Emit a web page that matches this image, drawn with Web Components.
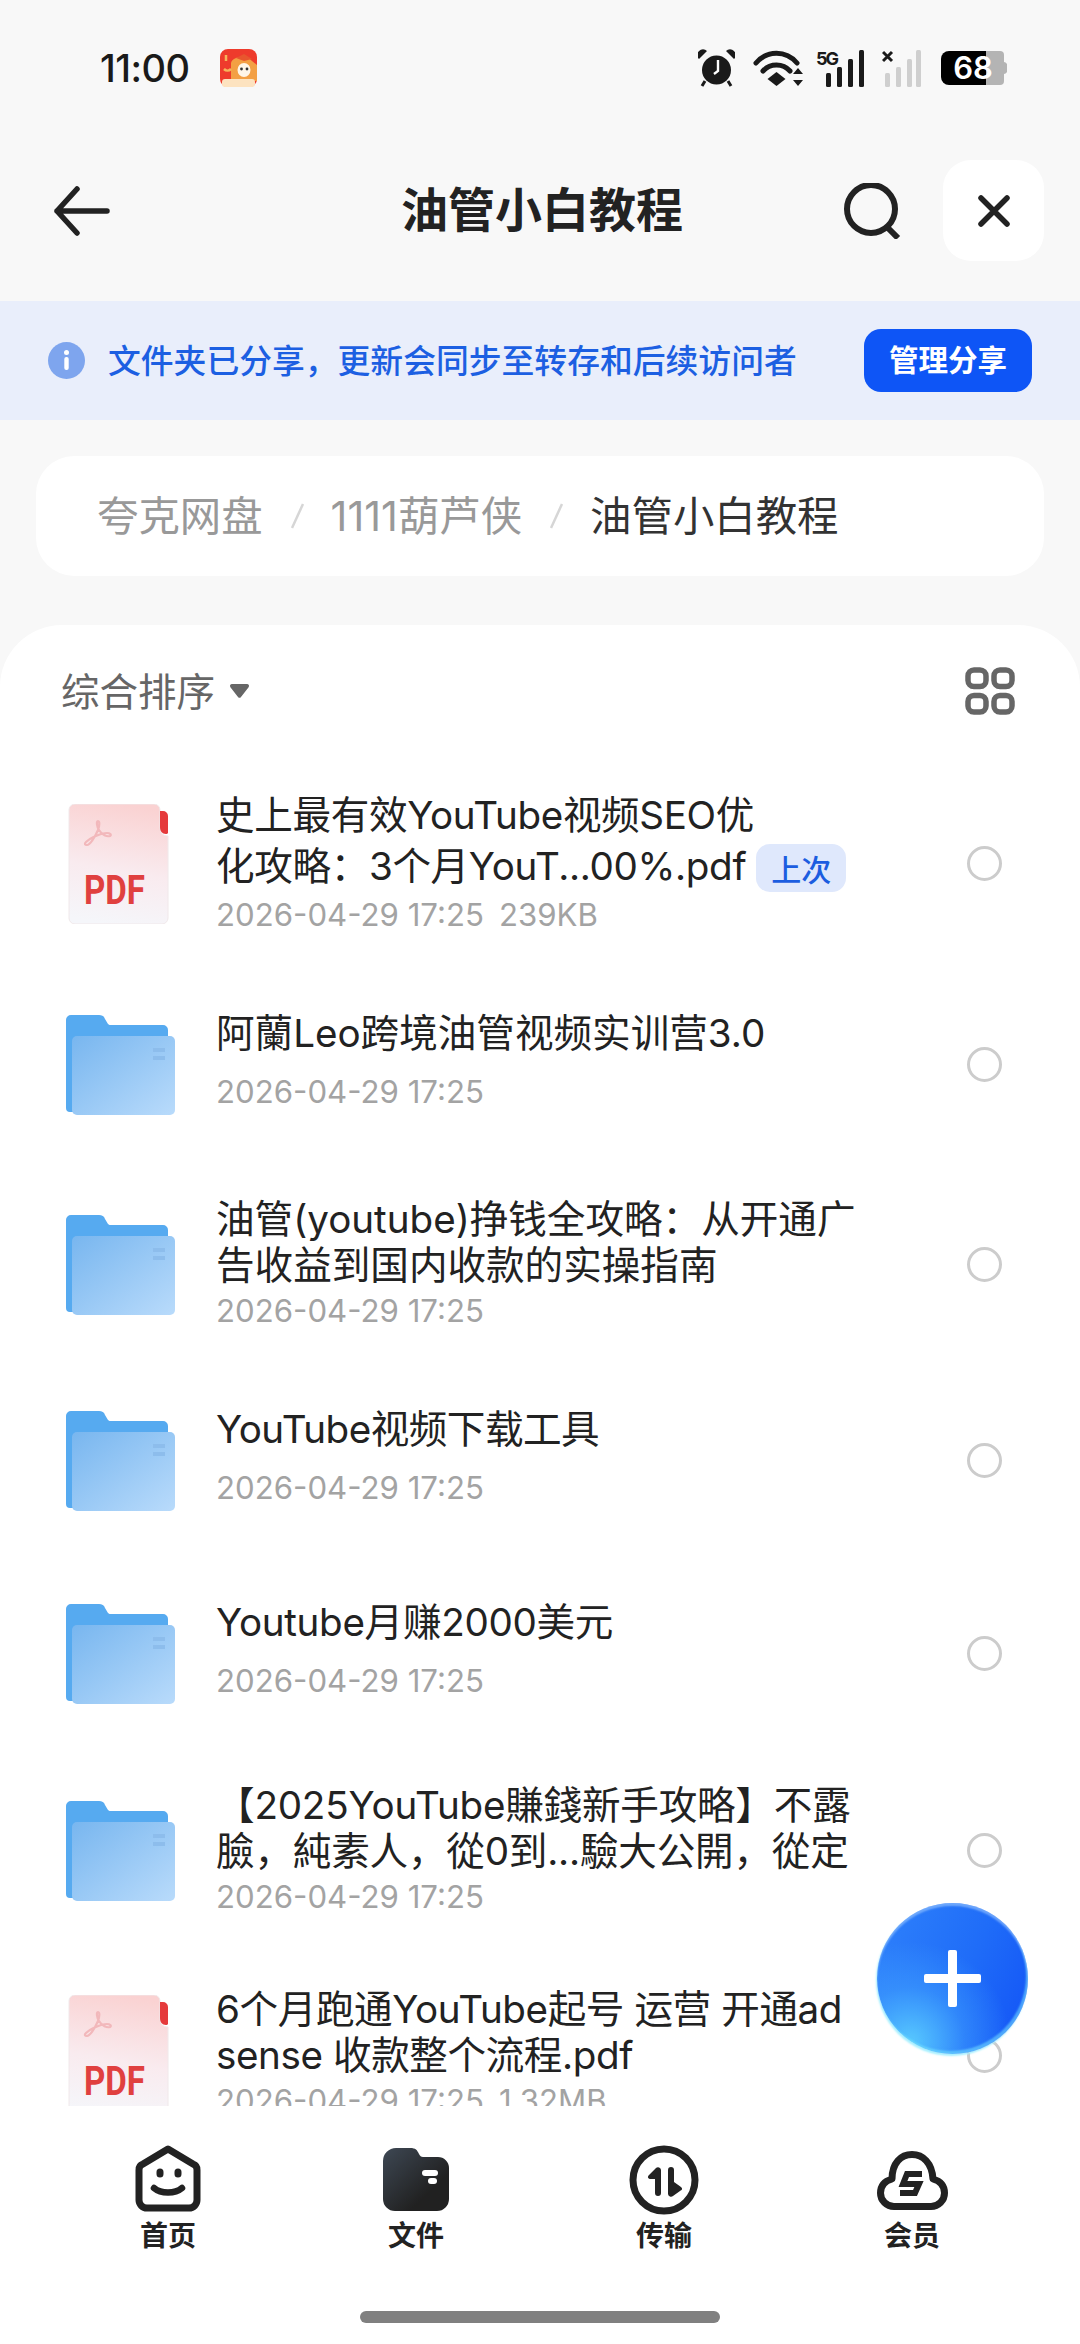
<!DOCTYPE html>
<html lang="zh">
<head>
<meta charset="utf-8">
<title>油管小白教程</title>
<style>
  html, body { margin: 0; padding: 0; background: #f8f8f8; }
  body { font-family: Inter, "Noto Sans CJK SC", sans-serif; }
</style>
</head>
<body>
<quark-page>
  <status-bar></status-bar>
  <top-bar>油管小白教程</top-bar>
  <share-banner>文件夹已分享，更新会同步至转存和后续访问者</share-banner>
  <bread-crumb>
    <crumb-item>夸克网盘</crumb-item>
    <crumb-item>1111葫芦侠</crumb-item>
    <crumb-item current>油管小白教程</crumb-item>
  </bread-crumb>
  <file-sheet>
    <sort-bar>综合排序</sort-bar>
    <file-row kind="pdf" size="239KB" h="201" ls="-.35" tall>史上最有效YouTube视频SEO优<br>化攻略：3个月YouT...00%.pdf<last-badge>上次</last-badge></file-row>
    <file-row kind="folder" h="201" single>阿蘭Leo跨境油管视频实训营3.0</file-row>
    <file-row kind="folder" h="199">油管(youtube)挣钱全攻略：从开通广<br>告收益到国内收款的实操指南</file-row>
    <file-row kind="folder" h="193" ls="-.5" single>YouTube视频下载工具</file-row>
    <file-row kind="folder" h="193" ls="-.3" single>Youtube月赚2000美元</file-row>
    <file-row kind="folder" h="201" ls="-.2">【2025YouTube賺錢新手攻略】不露<br>臉，純素人，從0到...驗大公開，從定</file-row>
    <file-row kind="pdf" size="1.32MB" h="208" ls="-.4">6个月跑通YouTube起号 运营 开通ad<br>sense 收款整个流程.pdf</file-row>
  </file-sheet>
  <tab-bar>
    <tab-item icon="home">首页</tab-item>
    <tab-item icon="files">文件</tab-item>
    <tab-item icon="transfer">传输</tab-item>
    <tab-item icon="member">会员</tab-item>
  </tab-bar>
  <add-button></add-button>
</quark-page>

<script>
const define = (name, html, setup) => {
  const template = document.createElement('template');
  template.innerHTML = html;
  customElements.define(name, class extends HTMLElement {
    constructor () {
      super();
      this.attachShadow({ mode: 'open' });
      this.shadowRoot.appendChild(template.content.cloneNode(true));
    }
    connectedCallback() {
      if (setup) setup(this, this.shadowRoot);
    }
  });
};

define('quark-page', `
<style>
  :host {
    display: flex;
    flex-direction: column;
    position: relative;
    width: 1080px;
    height: 2344px;
    overflow: hidden;
    background: #f8f8f8;
  }
</style>
<slot></slot>
`);

define('status-bar', `
<style>
  :host {
    display: flex;
    align-items: center;
    height: 136px;
    padding: 0 73px 0 100px;
    box-sizing: border-box;
    flex: none;
    color: #1a1a1a;
    margin-bottom: -16px;
  }
  .time { font: 500 38px Inter, sans-serif; letter-spacing: -.5px; }
  .app { margin-left: 30px; }
  .right { margin-left: auto; display: flex; align-items: center; }
  svg { display: block; }
  .batt { position: relative; width: 66px; height: 34px; margin-left: 20px; }
  .batt span {
    position: absolute; left: 0; top: 0; width: 64px; height: 34px;
    text-align: center; color: #fff; font: 600 31px/34px Inter, sans-serif;
  }
</style>
<span class="time">11:00</span>
<svg class="app" width="37" height="38" viewBox="0 0 37 38">
  <rect width="37" height="38" rx="8" fill="#ee3b2c"/>
  <path d="M11 14c2-7 16-8 21-2l5 4v16H11z" fill="#f3a044"/>
  <path d="M16 9l8-4 8 5-8 2z" fill="#e8562e"/>
  <ellipse cx="24" cy="21" rx="6.500" ry="7" fill="#fff6e8"/>
  <circle cx="21.500" cy="20" r="1.400" fill="#333"/><circle cx="27" cy="20" r="1.400" fill="#333"/>
  <path d="M6 6v6M4 20c2 2 5 2 7 0" stroke="#f6b45a" stroke-width="2.500" fill="none"/>
  <rect x="2" y="30" width="33" height="8" rx="3" fill="#fde3c0"/>
</svg>
<div class="right">
  <svg width="37" height="38" viewBox="0 0 37 38">
    <circle cx="18.500" cy="21" r="14.500" fill="#1a1a1a"/>
    <path d="M1 10L9 2a5.500 5.500 0 0 0-8 8zM36 10l-8-8a5.500 5.500 0 0 1 8 8z" fill="#1a1a1a"/>
    <path d="M7 32l-3 5M30 32l3 5" stroke="#1a1a1a" stroke-width="3"/>
    <path d="M20 11v11l-4 3" stroke="#fff" stroke-width="2.400" fill="none"/>
  </svg>
  <svg style="margin-left:18px" width="50" height="38" viewBox="0 0 50 38">
    <path d="M3 14c11-13 30-13 41 0" stroke="#1a1a1a" stroke-width="5" fill="none" stroke-linecap="round"/>
    <path d="M10 22c7-8 20-8 27 0" stroke="#1a1a1a" stroke-width="5" fill="none" stroke-linecap="round"/>
    <path d="M23.500 23l9 7-9 7-9-7z" fill="#1a1a1a"/>
    <path d="M45 19l5 6H40zM45 37l5-6H40z" fill="#1a1a1a"/>
  </svg>
  <svg style="margin-left:13px" width="49" height="38" viewBox="0 0 49 38">
    <text x="0" y="16" font-family="Inter, sans-serif" font-size="18" font-weight="700" fill="#1a1a1a" textLength="23">5G</text>
    <rect x="10" y="24" width="5" height="14" rx="1.500" fill="#1a1a1a"/>
    <rect x="21" y="18" width="5" height="20" rx="1.500" fill="#1a1a1a"/>
    <rect x="32" y="10" width="5" height="28" rx="1.500" fill="#1a1a1a"/>
    <rect x="43" y="1" width="5" height="37" rx="1.500" fill="#1a1a1a"/>
  </svg>
  <svg style="margin-left:17px" width="39" height="38" viewBox="0 0 39 38">
    <path d="M1 3l9 9M10 3l-9 9" stroke="#1a1a1a" stroke-width="3"/>
    <rect x="3" y="24" width="5" height="14" rx="1.500" fill="#cfcfcf"/>
    <rect x="14" y="18" width="5" height="20" rx="1.500" fill="#cfcfcf"/>
    <rect x="25" y="10" width="5" height="28" rx="1.500" fill="#cfcfcf"/>
    <rect x="34" y="1" width="5" height="37" rx="1.500" fill="#cfcfcf"/>
  </svg>
  <div class="batt">
    <svg width="66" height="34" viewBox="0 0 66 34">
      <path d="M45 0H8a8 8 0 0 0-8 8v18a8 8 0 0 0 8 8h37z" fill="#000"/>
      <path d="M45 0h14a4 4 0 0 1 4 4v26a4 4 0 0 1-4 4H45z" fill="#b4b4b4"/>
      <path d="M63 11a4 6 0 0 1 0 12z" fill="#b4b4b4"/>
    </svg>
    <span>68</span>
  </div>
</div>
`);

define('top-bar', `
<style>
  :host {
    display: grid;
    grid-template-columns: 1fr auto 1fr;
    align-items: center;
    height: 181px;
    padding: 0 36px 0 54px;
    box-sizing: border-box;
    flex: none;
  }
  .title {
    font: 700 47px/60px "Noto Sans CJK SC", sans-serif;
    color: #222;
    margin-top: -8px;
    padding-right: 14px;
  }
  .right { display: flex; align-items: center; justify-content: flex-end; }
  .close {
    width: 101px; height: 101px; border-radius: 28px; background: #fff;
    display: flex; align-items: center; justify-content: center;
    margin-left: 42px;
  }
  svg { display: block; }
</style>
<svg width="56" height="50" viewBox="0 0 56 50" fill="none" stroke="#222" stroke-width="5.500" stroke-linecap="round" stroke-linejoin="round">
  <path d="M3 25h50M23 3L3 25l20 22"/>
</svg>
<div class="title"><slot></slot></div>
<div class="right">
  <svg width="58" height="56" viewBox="0 0 58 56" fill="none" stroke="#222" stroke-width="6" stroke-linecap="round">
    <circle cx="28" cy="26" r="24"/>
    <path d="M44 44l11 11" stroke-linecap="butt"/>
  </svg>
  <div class="close">
    <svg width="32" height="32" viewBox="0 0 32 32" stroke="#222" stroke-width="5.500" stroke-linecap="round">
      <path d="M3 3l26 26M29 3L3 29"/>
    </svg>
  </div>
</div>
`);

define('share-banner', `
<style>
  :host {
    display: flex;
    align-items: center;
    height: 119px;
    padding: 0 48px;
    box-sizing: border-box;
    background: #e9eefb;
    flex: none;
  }
  svg { display: block; flex: none; }
  .text {
    margin-left: 23px;
    font: 500 32.800px/44px "Noto Sans CJK SC", sans-serif;
    color: #1c5fe2;
    white-space: nowrap;
    margin-top: -3px;
  }
  .btn {
    margin-left: auto;
    width: 168px; height: 63px;
    border-radius: 17px;
    background: #0e55f6;
    color: #fff;
    font: 700 29.500px/58px "Noto Sans CJK SC", sans-serif;
    text-align: center;
  }
</style>
<svg width="37" height="37" viewBox="0 0 37 37">
  <circle cx="18.500" cy="18.500" r="18.500" fill="#7ea5ee"/>
  <circle cx="18.500" cy="10.500" r="2.500" fill="#fff"/>
  <rect x="16.300" y="15" width="4.400" height="13" rx="2" fill="#fff"/>
</svg>
<span class="text"><slot></slot></span>
<span class="btn">管理分享</span>
`);

define('bread-crumb', `
<style>
  :host {
    display: flex;
    align-items: center;
    height: 120px;
    margin: 36px 36px 0;
    padding-left: 61px;
    box-sizing: border-box;
    background: #fff;
    border-radius: 38px;
    flex: none;
  }
</style>
<slot></slot>
`);

define('crumb-item', `
<style>
  :host {
    display: inline-flex;
    align-items: center;
    font: 400 41.400px/52px Inter, "Noto Sans CJK SC", sans-serif;
    color: #999;
    white-space: nowrap;
  }
  :host([current]) { color: #333; }
  .sep { display: inline-block; width: 13px; height: 26px; margin: 0 27px 0 28px; }
  :host([current]) .sep { display: none; }
</style>
<slot></slot>
<svg class="sep" viewBox="0 0 13 26"><path d="M12 1L1 25" stroke="#d6d6d6" stroke-width="2.500"/></svg>
`);

define('file-sheet', `
<style>
  :host {
    display: block;
    flex: 1;
    min-height: 0;
    margin-top: 49px;
    background: #fff;
    border-radius: 62px 62px 0 0;
    overflow: hidden;
  }
</style>
<slot></slot>
`);

define('sort-bar', `
<style>
  :host {
    display: flex;
    align-items: center;
    height: 138px;
    padding: 0 65px 6px 61px;
    box-sizing: border-box;
    font: 400 38.500px/50px "Noto Sans CJK SC", sans-serif;
    color: #666;
  }
  .label { margin-top: -5px; }
  .arrow { margin-left: 14px; }
  .grid { margin-left: auto; margin-top: -1px; }
  svg { display: block; }
</style>
<span class="label"><slot></slot></span>
<svg class="arrow" width="21" height="16" viewBox="0 0 21 16"><path d="M3 1h15a2 2 0 0 1 1.600 3.200L12 14a2 2 0 0 1-3 0L1.400 4.200A2 2 0 0 1 3 1z" fill="#666"/></svg>
<svg class="grid" width="50" height="48" viewBox="0 0 50 48" fill="none" stroke="#666" stroke-width="5.500">
  <rect x="3" y="3" width="18" height="16.500" rx="6"/><rect x="29" y="3" width="18" height="16.500" rx="6"/>
  <rect x="3" y="28.500" width="18" height="16.500" rx="6"/><rect x="29" y="28.500" width="18" height="16.500" rx="6"/>
</svg>
`);

const pdfIcon = `
<svg width="110" height="120" viewBox="0 0 110 120">
  <defs>
    <linearGradient id="pg" x1=".55" y1="0" x2=".4" y2="1">
      <stop offset="0" stop-color="#fad2d2"/><stop offset=".55" stop-color="#f9ebef"/><stop offset="1" stop-color="#f5f6fa"/>
    </linearGradient>
  </defs>
  <path d="M10 0h79a6 6 0 0 1 6 6v17c0 6 3 9 8 9v82a6 6 0 0 1-6 6H10a6 6 0 0 1-6-6V6a6 6 0 0 1 6-6z" fill="url(#pg)" stroke="#f0e8ea" stroke-width="1"/>
  <path d="M95 7h3a5 5 0 0 1 5 5v17a2 2 0 0 1-2 1c-4 0-6-3-6-7z" fill="#e53a3c"/>
  <path d="M22 41c3 0 8-8 11-15 1.500-4 2-9 0-9-2 0-1 6 1 9 3 5 8 7 11 6 2-1 0-3-3-3-6 0-17 5-21 9-2 2-1 3 1 3z" fill="none" stroke="#f2b8bb" stroke-width="2.200"/>
  <text x="19" y="100" font-family="Roboto, sans-serif" font-size="41" font-weight="700" fill="#e0403f" textLength="61" lengthAdjust="spacingAndGlyphs">PDF</text>
</svg>`;

const folderIcon = `
<svg width="110" height="100" viewBox="0 0 110 100">
  <defs>
    <linearGradient id="fg" x1="0" y1="0" x2="1" y2="1">
      <stop offset="0" stop-color="#78b6ef"/><stop offset="1" stop-color="#b9dbfb"/>
    </linearGradient>
  </defs>
  <path d="M1 5a5 5 0 0 1 5-5h28c3 0 5 1 6 4l3 5c1 1 2 1 3 1h52a5 5 0 0 1 5 5v82H5a4 4 0 0 1-4-4z" fill="#56aaf0"/>
  <rect x="7" y="21" width="103" height="79" rx="5" fill="url(#fg)"/>
  <rect x="88" y="33" width="12" height="4" fill="#8dbdec"/>
  <rect x="88" y="41" width="12" height="4" fill="#8dbdec"/>
</svg>`;

define('file-row', `
<style>
  :host {
    display: flex;
    align-items: center;
    padding: 0 78px 0 65px;
    box-sizing: border-box;
  }
  .icon { width: 110px; flex: none; display: flex; justify-content: center; margin-right: 41px; }
  svg { display: block; }
  .body { flex: 1; min-width: 0; }
  :host([single]) .body { margin-top: -4px; }
  .title {
    font: 400 38.600px/46px Inter, "Noto Sans CJK SC", sans-serif;
    color: #222;
    white-space: nowrap;
  }
  :host([single]) .title { margin-bottom: 13px; }
  :host([tall]) .title { line-height: 51px; }
  .meta {
    font: 400 31.200px/46px Inter, "Noto Sans CJK SC", sans-serif;
    color: #a3a3a3;
    white-space: pre;
  }
  .meta span { margin-left: 15px; }
  .radio {
    width: 35px; height: 35px; border-radius: 50%;
    border: 3.500px solid #cccccc; box-sizing: border-box; flex: none;
  }
</style>
<div class="icon"></div>
<div class="body">
  <div class="title"><slot></slot></div>
  <div class="meta">2026-04-29 17:25<span></span></div>
</div>
<div class="radio"></div>
`, (el, root) => {
  root.querySelector('.icon').innerHTML = el.getAttribute('kind') === 'pdf' ? pdfIcon : folderIcon;
  root.querySelector('.meta span').textContent = el.getAttribute('size') || '';
  root.querySelector('.title').style.letterSpacing = (el.getAttribute('ls') || 0) + 'px';
  el.style.height = el.getAttribute('h') + 'px';
});

define('last-badge', `
<style>
  :host {
    display: inline-block;
    width: 90px; height: 48px;
    margin: -10px 0 -10px 10px;
    border-radius: 14px;
    background: #dfe8fc;
    color: #1c5de0;
    font: 500 30px/48px "Noto Sans CJK SC", sans-serif;
    letter-spacing: 0;
    text-align: center;
    vertical-align: -1px;
  }
</style>
<slot></slot>
`);

define('tab-bar', `
<style>
  :host {
    display: block;
    position: relative;
    height: 238px;
    flex: none;
    background: #fff;
  }
  .tabs {
    display: grid;
    grid-template-columns: repeat(4, 248px);
    padding: 37px 0 0 44px;
  }
  .home-line {
    width: 360px; height: 12px; border-radius: 6px; background: #808080;
    margin: 59px auto 0;
  }
</style>
<div class="tabs"><slot></slot></div>
<div class="home-line"></div>
`);

const tabIcons = {
  home: `<svg width="70" height="70" viewBox="0 0 70 70" fill="none" stroke="#222" stroke-width="7" stroke-linecap="round" stroke-linejoin="round">
    <path d="M35 6L10 21a6 6 0 0 0-4 6v30a8 8 0 0 0 8 8h42a8 8 0 0 0 8-8V27a6 6 0 0 0-4-6z"/>
    <path d="M27 29v2M45 29v2"/>
    <path d="M21 45c7 6 21 6 28 0" stroke-width="6.500"/>
  </svg>`,
  files: `<svg width="70" height="70" viewBox="0 0 70 70">
    <defs><linearGradient id="tf" x1="0" y1="0" x2=".7" y2=".7">
      <stop offset="0" stop-color="#3e4854"/><stop offset="1" stop-color="#212121"/>
    </linearGradient></defs>
    <path d="M2 18A13 13 0 0 1 15 5h14c6 0 7 2 9 6 1 2 2 3 4 3h15a11 11 0 0 1 11 11v31a12 12 0 0 1-12 12H14A12 12 0 0 1 2 56z" fill="url(#tf)"/>
    <rect x="41" y="27" width="16" height="6" rx="3" fill="#fff"/>
    <rect x="47" y="35" width="9" height="6" rx="3" fill="#fff"/>
  </svg>`,
  transfer: `<svg width="70" height="70" viewBox="0 0 70 70" style="overflow:visible">
    <circle cx="35" cy="37" r="31" fill="none" stroke="#222" stroke-width="7"/>
    <path d="M32 27a3 3 0 0 0-5-2l-7 7c-2 2-1 4 2 4h4v14a3 3 0 0 0 6 0z" fill="#222"/>
    <path d="M39 27a3 3 0 0 1 6 0v12l7 5c2 2 1 3-1 4l-7 5a3 3 0 0 1-5-2z" fill="#222"/>
  </svg>`,
  member: `<svg width="74" height="70" viewBox="0 2 74 70" fill="none" stroke="#222" stroke-width="7" stroke-linejoin="round">
    <path d="M19 65.500A13.500 13.500 0 0 1 5.500 52C5.500 44 10 40 17 38C17 22 26 13.500 37 13.500S57 22 58 38C65 40 69.500 44 69.500 52A13.500 13.500 0 0 1 56 65.500Z"/>
    <path d="M47 33H32l-4 10h16l-4 9H25" stroke-width="6" stroke-linejoin="miter"/>
  </svg>`
};

define('tab-item', `
<style>
  :host {
    display: flex;
    flex-direction: column;
    align-items: center;
    font: 700 28px/36px "Noto Sans CJK SC", sans-serif;
    color: #222;
  }
  .ico { height: 70px; margin-bottom: 3px; }
  svg { display: block; }
</style>
<div class="ico"></div>
<slot></slot>
`, (el, root) => {
  root.querySelector('.ico').innerHTML = tabIcons[el.getAttribute('icon')];
});

define('add-button', `
<style>
  :host {
    position: absolute;
    left: 877px;
    top: 1903px;
    width: 151px;
    height: 151px;
    border-radius: 50%;
    background:
      radial-gradient(circle at 22% 92%, rgba(90,205,255,.95) 0, rgba(70,170,255,.45) 30%, rgba(40,120,255,0) 55%),
      linear-gradient(115deg, #2f82fb 0%, #1f6cf8 55%, #1252f6 100%);
    box-shadow: inset 0 3px 2px rgba(170,210,255,.55), inset -2px -3px 2px rgba(120,230,255,.55), -1px 2px 2px #a8f0ff;
    display: flex;
    align-items: center;
    justify-content: center;
  }
  svg { display: block; }
</style>
<svg width="57" height="57" viewBox="0 0 57 57">
  <rect x="24" y="0" width="9" height="57" rx="2" fill="#fff"/>
  <rect x="0" y="24" width="57" height="9" rx="2" fill="#fff"/>
</svg>
`);
</script>
</body>
</html>
